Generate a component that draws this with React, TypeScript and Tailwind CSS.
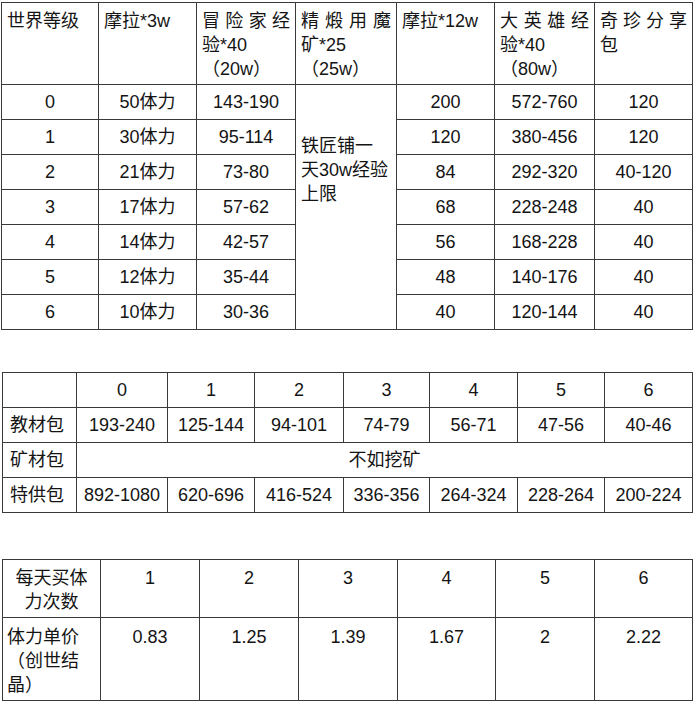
import React from "react";

const cell = "border border-[#3a3a3a] p-0";

const levelRows = [
  ["0", "50体力", "143-190", "200", "572-760", "120"],
  ["1", "30体力", "95-114", "120", "380-456", "120"],
  ["2", "21体力", "73-80", "84", "292-320", "40-120"],
  ["3", "17体力", "57-62", "68", "228-248", "40"],
  ["4", "14体力", "42-57", "56", "168-228", "40"],
  ["5", "12体力", "35-44", "48", "140-176", "40"],
  ["6", "10体力", "30-36", "40", "120-144", "40"],
];

const packCols = ["0", "1", "2", "3", "4", "5", "6"];
const textbook = ["193-240", "125-144", "94-101", "74-79", "56-71", "47-56", "40-46"];
const special = ["892-1080", "620-696", "416-524", "336-356", "264-324", "228-264", "200-224"];

const buyTimes = ["1", "2", "3", "4", "5", "6"];
const unitPrice = ["0.83", "1.25", "1.39", "1.67", "2", "2.22"];

function HeadCell({ lines }: { lines: { text: string; spread?: boolean }[] }) {
  return (
    <th className={`${cell} align-top text-left font-normal px-[5px] pt-[6px]`}>
      {lines.map((l, i) => (
        <span
          key={i}
          className={l.spread ? "block text-justify [text-align-last:justify]" : "block"}
        >
          {l.text}
        </span>
      ))}
    </th>
  );
}

export default function App() {
  return (
    <div className="min-h-screen bg-white text-[#141414] text-[18px] leading-[24px] font-['Liberation_Sans','Noto_Sans_CJK_SC',sans-serif] pt-[2px] pl-[1px]">
      {/* 世界等级 table */}
      <table className="border-collapse table-fixed w-[691px]">
        <colgroup>
          <col className="w-[97px]" />
          <col className="w-[98px]" />
          <col className="w-[99px]" />
          <col className="w-[101px]" />
          <col className="w-[98px]" />
          <col className="w-[100px]" />
          <col className="w-[98px]" />
        </colgroup>
        <thead>
          <tr className="h-[82px]">
            <HeadCell lines={[{ text: "世界等级" }]} />
            <HeadCell lines={[{ text: "摩拉*3w" }]} />
            <HeadCell
              lines={[{ text: "冒险家经", spread: true }, { text: "验*40" }, { text: "（20w）" }]}
            />
            <HeadCell
              lines={[{ text: "精煅用魔", spread: true }, { text: "矿*25" }, { text: "（25w）" }]}
            />
            <HeadCell lines={[{ text: "摩拉*12w" }]} />
            <HeadCell
              lines={[{ text: "大英雄经", spread: true }, { text: "验*40" }, { text: "（80w）" }]}
            />
            <HeadCell lines={[{ text: "奇珍分享", spread: true }, { text: "包" }]} />
          </tr>
        </thead>
        <tbody>
          {levelRows.map((r, i) => (
            <tr key={i} className="h-[35px]">
              <td className={`${cell} text-center align-middle`}>{r[0]}</td>
              <td className={`${cell} text-center align-middle`}>{r[1]}</td>
              <td className={`${cell} text-center align-middle`}>{r[2]}</td>
              {i === 0 && (
                <td rowSpan={7} className={`${cell} align-top text-left pl-[5px] pt-[49px]`}>
                  <span className="block">铁匠铺一</span>
                  <span className="block">天30w经验</span>
                  <span className="block">上限</span>
                </td>
              )}
              <td className={`${cell} text-center align-middle`}>{r[3]}</td>
              <td className={`${cell} text-center align-middle`}>{r[4]}</td>
              <td className={`${cell} text-center align-middle`}>{r[5]}</td>
            </tr>
          ))}
        </tbody>
      </table>

      {/* 包 table */}
      <table className="border-collapse table-fixed w-[690px] mt-[42px] ml-[1px]">
        <colgroup>
          <col className="w-[74px]" />
          <col className="w-[91px]" />
          <col className="w-[87px]" />
          <col className="w-[89px]" />
          <col className="w-[86px]" />
          <col className="w-[88px]" />
          <col className="w-[87px]" />
          <col className="w-[88px]" />
        </colgroup>
        <tbody>
          <tr className="h-[35px]">
            <td className={cell}></td>
            {packCols.map((c) => (
              <td key={c} className={`${cell} text-center`}>
                {c}
              </td>
            ))}
          </tr>
          <tr className="h-[35px]">
            <td className={`${cell} pl-[7px]`}>教材包</td>
            {textbook.map((v) => (
              <td key={v} className={`${cell} text-center`}>
                {v}
              </td>
            ))}
          </tr>
          <tr className="h-[35px]">
            <td className={`${cell} pl-[7px]`}>矿材包</td>
            <td colSpan={7} className={`${cell} text-center`}>
              不如挖矿
            </td>
          </tr>
          <tr className="h-[35px]">
            <td className={`${cell} pl-[7px]`}>特供包</td>
            {special.map((v) => (
              <td key={v} className={`${cell} text-center`}>
                {v}
              </td>
            ))}
          </tr>
        </tbody>
      </table>

      {/* 体力 table */}
      <table className="border-collapse table-fixed w-[690px] mt-[46px] ml-[1px]">
        <colgroup>
          <col className="w-[98px]" />
          <col className="w-[99px]" />
          <col className="w-[99px]" />
          <col className="w-[99px]" />
          <col className="w-[98px]" />
          <col className="w-[99px]" />
          <col className="w-[98px]" />
        </colgroup>
        <tbody>
          <tr className="h-[58px]">
            <td className={`${cell} align-top text-center pt-[6px]`}>
              <span className="block">每天买体</span>
              <span className="block">力次数</span>
            </td>
            {buyTimes.map((v) => (
              <td key={v} className={`${cell} align-top text-center pt-[6px]`}>
                {v}
              </td>
            ))}
          </tr>
          <tr className="h-[83px]">
            <td className={`${cell} align-top text-left pl-[4px] pt-[7px]`}>
              <span className="block">体力单价</span>
              <span className="block">（创世结</span>
              <span className="block">晶）</span>
            </td>
            {unitPrice.map((v) => (
              <td key={v} className={`${cell} align-top text-center pt-[7px]`}>
                {v}
              </td>
            ))}
          </tr>
        </tbody>
      </table>
    </div>
  );
}
